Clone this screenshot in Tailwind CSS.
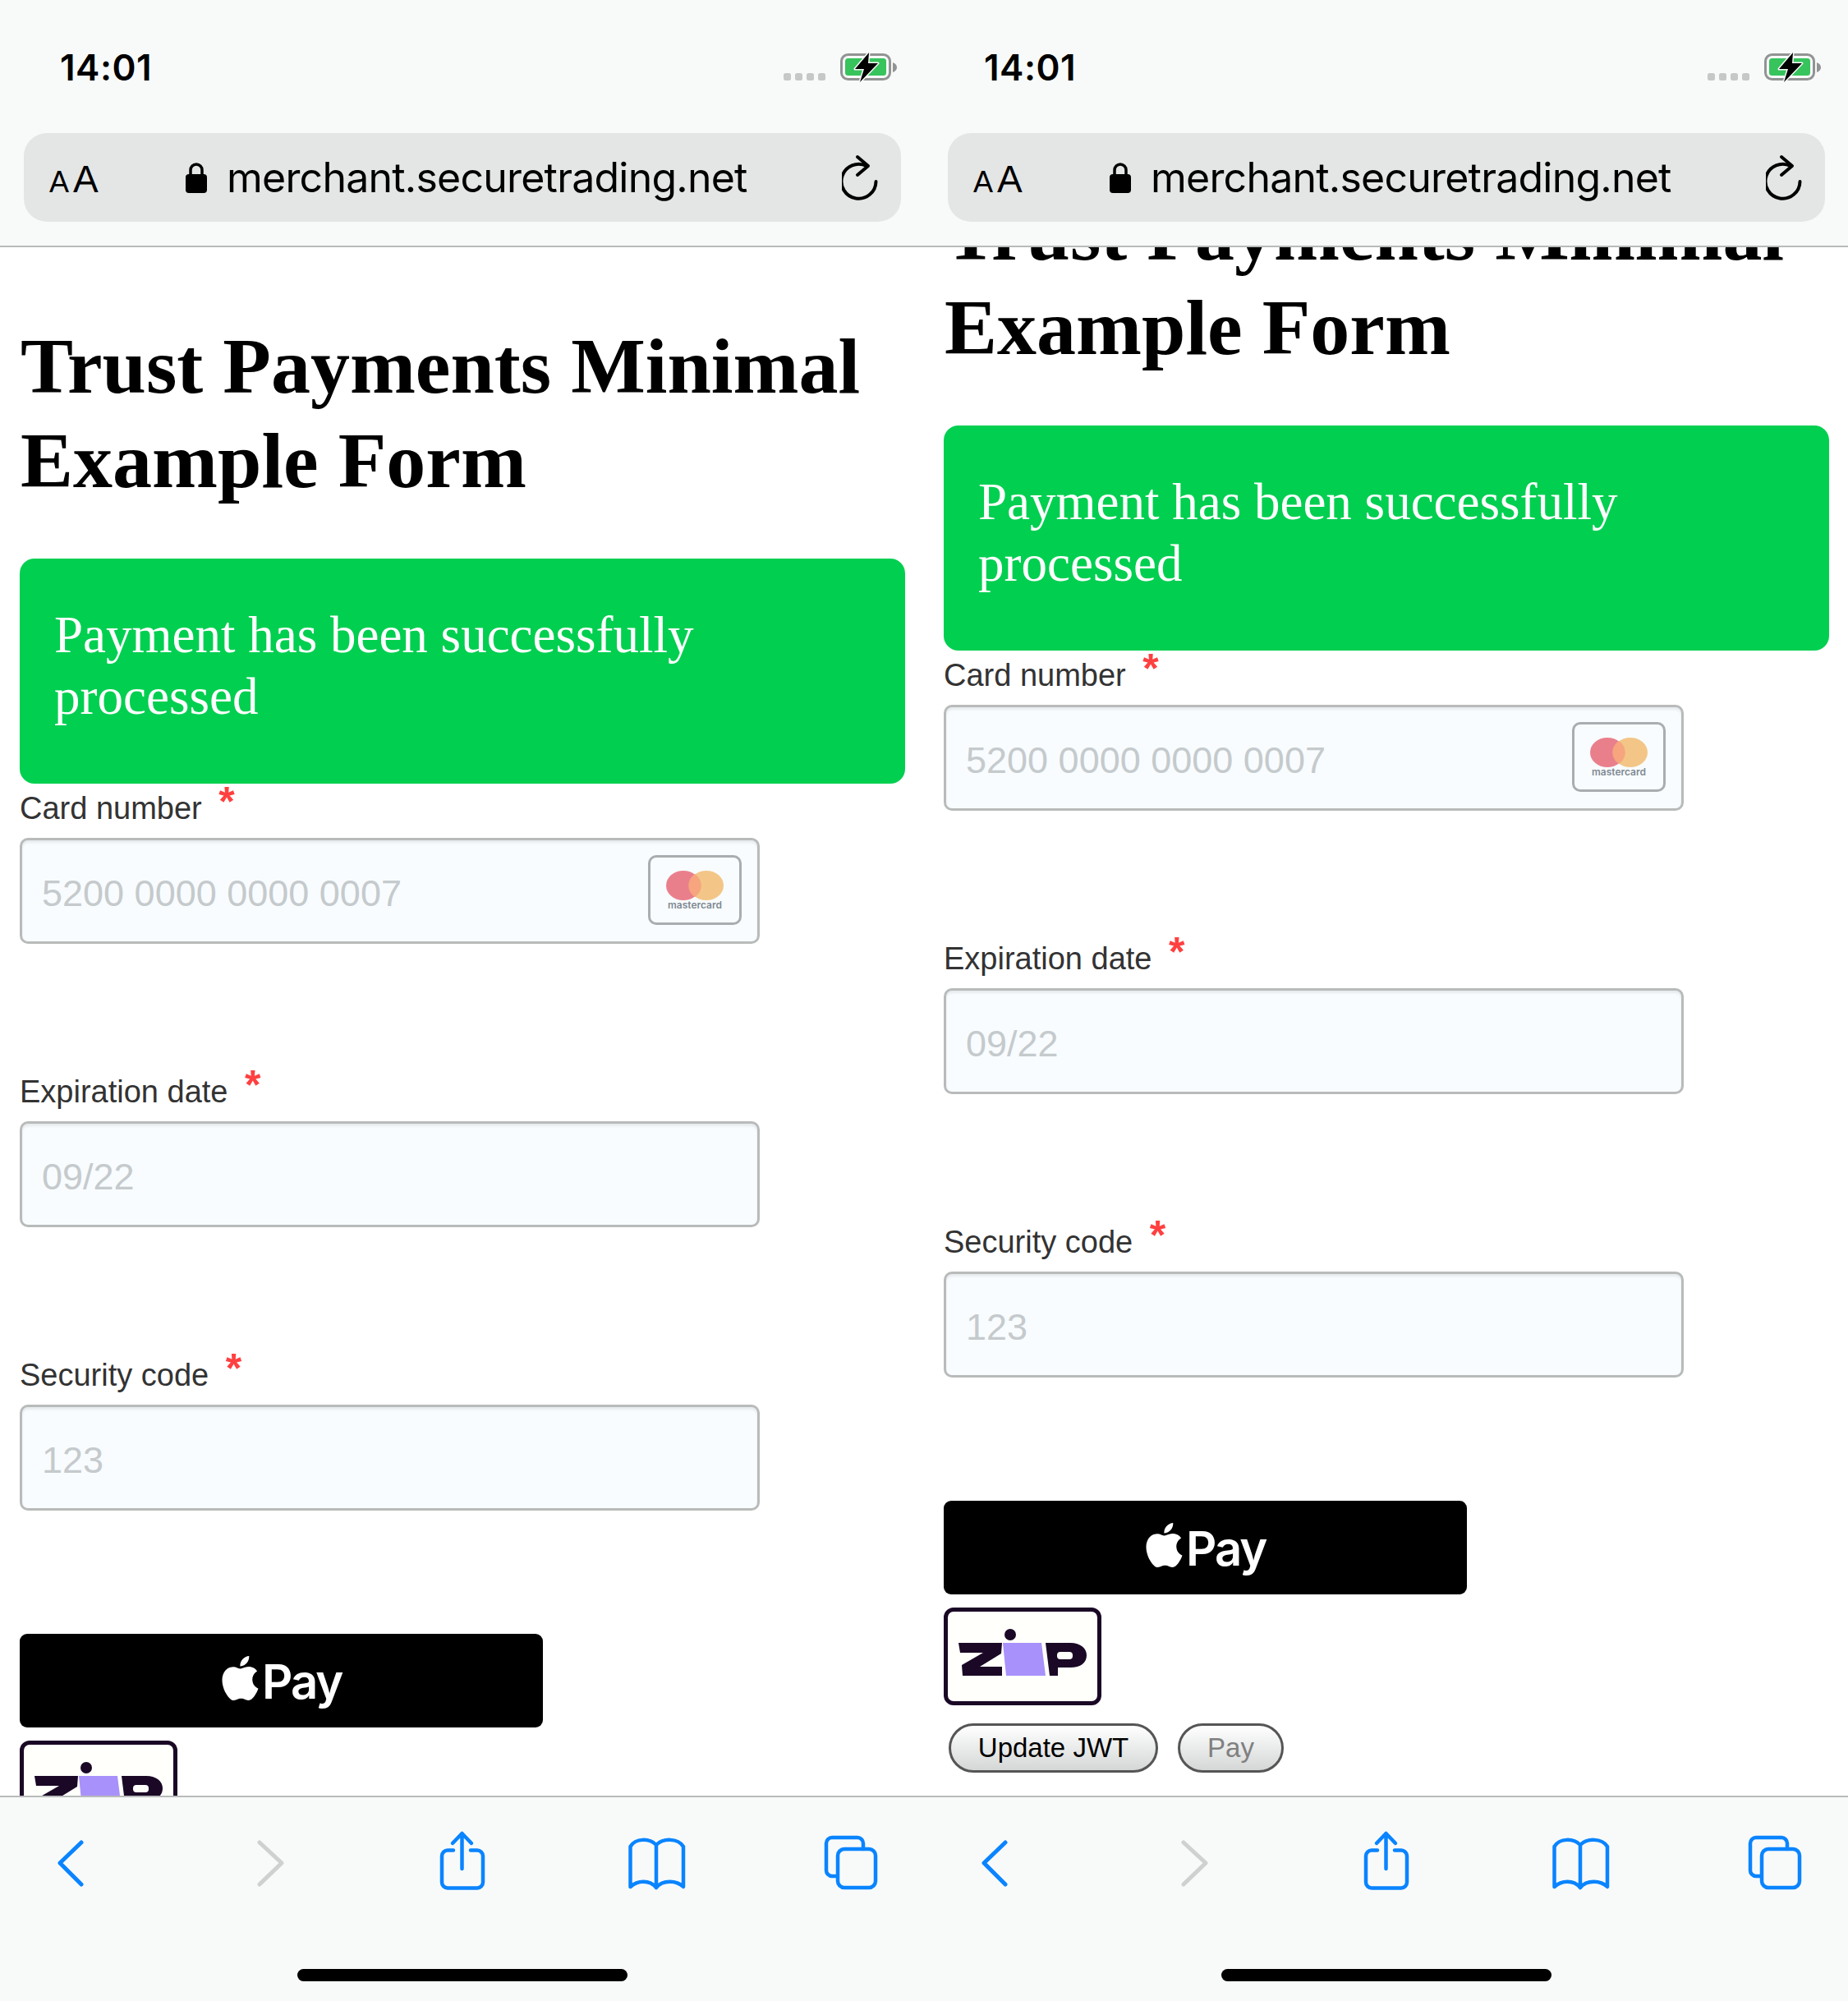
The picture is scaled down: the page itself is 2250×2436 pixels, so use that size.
<!DOCTYPE html>
<html>
<head>
<meta charset="utf-8">
<script src="https://cdn.jsdelivr.net/npm/@tailwindcss/browser@4"></script>
</head>
<body class="m-0 bg-white">
<div class="flex w-[2250px] h-[2436px] overflow-hidden">

<!-- LEFT PANEL -->
<section class="w-[1125px] h-[2436px] flex flex-col">
  <header class="h-[301px] shrink-0 bg-[#f8fafa] border-b-[2px] border-[#b9bbbb] font-['Inter',sans-serif] text-black">
    <div class="h-[162px] pt-[50px] pl-[73px] pr-[30px] flex justify-between items-start">
      <span class="text-[44px] leading-[64px] font-semibold tracking-[0.5px]">14:01</span>
      <svg class="mt-[10px]" width="145" height="44" viewBox="950 60 145 44">
        <g fill="#c6c8c8"><rect x="954" y="89" width="9" height="9" rx="2.5"/><rect x="968" y="89" width="9" height="9" rx="2.5"/><rect x="982" y="89" width="9" height="9" rx="2.5"/><rect x="996" y="89" width="9" height="9" rx="2.5"/></g>
        <rect x="1024.5" y="66.5" width="59" height="30" rx="8" fill="none" stroke="#929494" stroke-width="3"/>
        <rect x="1029" y="71" width="50" height="21" rx="3.5" fill="#37c45c"/>
        <path d="M1087 76 q5 2 5 6 q0 4 -5 6z" fill="#929494"/>
        <path d="M1058 64 L1041 84 L1052 84 L1047 100 L1069 77 L1057 77 Z" fill="#000" stroke="#f8fafa" stroke-width="3" paint-order="stroke" stroke-linejoin="round"/>
      </svg>
    </div>
    <div class="mx-[29px] w-[1068px] h-[108px] rounded-[28px] bg-[#e4e6e6] flex items-center">
      <span class="ml-[31px] w-[60px] flex items-baseline font-['Liberation_Sans',sans-serif] leading-none mt-[4px]"><span class="text-[36px] mr-[5px]">A</span><span class="text-[46px]">A</span></span>
      <svg class="ml-[105px]" width="28" height="38" viewBox="0 0 28 38"><path d="M7 16 V10 a7 7 0 0 1 14 0 V16" fill="none" stroke="#000" stroke-width="3.5"/><rect x="1" y="15" width="26" height="23" rx="4" fill="#000"/></svg>
      <span class="ml-[23px] text-[50px] leading-none tracking-[-0.78px]">merchant.securetrading.net</span>
      <svg class="ml-auto mr-[22px]" width="50" height="56" viewBox="0 0 50 56" fill="none" stroke="#000" stroke-width="4" stroke-linecap="round" stroke-linejoin="round"><path d="M30 14 A21 21 0 1 0 41.5 33"/><path d="M19 3 L32 14 L19 25"/></svg>
    </div>
  </header>
  <div class="flex-1 min-h-0 overflow-hidden bg-white">
    <div class="mt-[87px] px-[24px]">
      <h1 class="m-0 ml-[1px] w-[1060px] font-['Liberation_Serif',serif] font-bold text-[96px] leading-[115px] text-black">Trust Payments Minimal Example Form</h1>
      <div class="mt-[62px] w-[1078px] h-[274px] rounded-[18px] bg-[#00cf50] pl-[42px] pt-[56px] font-['Liberation_Serif',serif] text-[63px] leading-[75px] text-white">Payment has been successfully<br>processed</div>
      <div class="font-['Liberation_Sans',sans-serif]">
        <div class="h-[66px] pt-[5px] text-[38px] leading-[50px] text-[#333]">Card number <span class="ml-[10px] text-[#ff4040] text-[50px] font-bold leading-[0] align-[4px]">*</span></div>
        <div class="w-[901px] h-[129px] border-[3px] border-[#b8bbb9] rounded-[10px] bg-[#f8fcff] shadow-[inset_0_3px_3px_rgba(0,0,0,0.07)] flex items-center pl-[24px] pr-[19px] text-[45px] text-[#c5cacc]">
          <span class="mt-[6px]">5200 0000 0000 0007</span>
          <div class="ml-auto mb-[2px] w-[114px] h-[85px] border-[3px] border-[#a9adb0] rounded-[10px] flex flex-col items-center pt-[16px]">
            <svg width="70" height="36" viewBox="0 0 70 36"><ellipse cx="21" cy="18" rx="21" ry="18" fill="#ea7f8c"/><ellipse cx="49" cy="18" rx="21" ry="18" fill="#f3c687"/><path d="M35 4 a21 18 0 0 1 0 28 a21 18 0 0 1 0 -28z" fill="#f6a57e"/></svg>
            <span class="text-[12px] leading-[12px] text-[#808a92] font-['Inter',sans-serif] font-semibold">mastercard</span>
          </div>
        </div>
        <div class="mt-[150px] h-[66px] pt-[5px] text-[38px] leading-[50px] text-[#333]">Expiration date <span class="ml-[10px] text-[#ff4040] text-[50px] font-bold leading-[0] align-[4px]">*</span></div>
        <div class="w-[901px] h-[129px] border-[3px] border-[#b8bbb9] rounded-[10px] bg-[#f8fcff] shadow-[inset_0_3px_3px_rgba(0,0,0,0.07)] flex items-center pl-[24px] text-[45px] text-[#c5cacc]"><span class="mt-[6px]">09/22</span></div>
        <div class="mt-[150px] h-[66px] pt-[5px] text-[38px] leading-[50px] text-[#333]">Security code <span class="ml-[10px] text-[#ff4040] text-[50px] font-bold leading-[0] align-[4px]">*</span></div>
        <div class="w-[901px] h-[129px] border-[3px] border-[#b8bbb9] rounded-[10px] bg-[#f8fcff] shadow-[inset_0_3px_3px_rgba(0,0,0,0.07)] flex items-center pl-[24px] text-[45px] text-[#c5cacc]"><span class="mt-[6px]">123</span></div>
        <div class="mt-[150px] w-[637px] h-[114px] rounded-[9px] bg-black flex items-center pl-[246px] gap-[4px] text-white">
          <svg width="45" height="54" viewBox="2.5 0 19 24" class="mb-[6px] blur-[0.5px]" fill="#fff"><path d="M12.152 6.896c-.948 0-2.415-1.078-3.96-1.04-2.04.027-3.91 1.183-4.961 3.014-2.117 3.675-.546 9.103 1.519 12.09 1.013 1.454 2.208 3.09 3.792 3.039 1.52-.065 2.09-.987 3.935-.987 1.831 0 2.35.987 3.96.948 1.637-.026 2.676-1.48 3.676-2.948 1.156-1.688 1.636-3.325 1.662-3.415-.039-.013-3.182-1.221-3.22-4.857-.026-3.04 2.48-4.494 2.597-4.559-1.429-2.09-3.623-2.324-4.39-2.376-2-.156-3.675 1.09-4.61 1.09zM15.53 3.83c.843-1.012 1.4-2.427 1.245-3.83-1.207.052-2.662.805-3.532 1.818-.78.896-1.454 2.338-1.273 3.714 1.338.104 2.715-.688 3.559-1.701"/></svg>
          <span class="text-[58px] leading-none font-['Inter',sans-serif] font-semibold tracking-[-2px] blur-[0.6px] mt-[2px]">Pay</span>
        </div>
        <div class="mt-[16px] w-[192px] h-[119px] border-[5px] border-[#1a0826] rounded-[12px] bg-[#fffffb]">
          <svg width="182" height="109" viewBox="1154 1961 182 109"><path d="M1167 1999 H1220 L1219 2012 L1193 2028 H1220 V2039 H1172 L1171 2026 L1197 2011 H1169 Z" fill="#1a0826"/><circle cx="1230" cy="1989" r="7" fill="#1a0826"/><path d="M1221 1999 H1268 L1273 2039 H1225 Z" fill="#a891fb"/><path d="M1273 1999 H1303 C1316 1999 1323 2006 1323 2014 C1323 2023 1316 2029 1303 2029 H1288 V2039 H1278 Z" fill="#1a0826"/><rect x="1287" y="2010" width="19" height="9" rx="4" fill="#fffffb"/></svg>
        </div>
        <div class="mt-[22px] ml-[6px] flex gap-[24px]">
          <div class="w-[255px] h-[60px] rounded-full border-[3px] border-[#555] bg-gradient-to-b from-[#ffffff] to-[#d5d7d7] flex items-center justify-center text-[33px] text-black">Update JWT</div>
          <div class="w-[129px] h-[60px] rounded-full border-[3px] border-[#555] bg-gradient-to-b from-[#ffffff] to-[#d5d7d7] flex items-center justify-center text-[33px] text-[#808080]">Pay</div>
        </div>
      </div>
    </div>
  </div>
  <footer class="h-[250px] shrink-0 bg-[#f8fafa] border-t-[2px] border-[#b9bbbb]">
    <div class="pt-[38px] pl-[66px] flex h-[118px]">
      <svg width="40" height="80" viewBox="66 2226 40 80" fill="none" stroke="#0a84ff" stroke-width="5" stroke-linecap="round" stroke-linejoin="round"><path d="M99 2243 L73 2268 L99 2294"/></svg>
      <svg class="ml-[204px]" width="40" height="80" viewBox="310 2226 40 80" fill="none" stroke="#cfd0d0" stroke-width="5" stroke-linecap="round" stroke-linejoin="round"><path d="M316 2243 L343 2268 L316 2294"/></svg>
      <svg class="ml-[180px]" width="65" height="80" viewBox="530 2226 65 80" fill="none" stroke="#0a84ff" stroke-width="4.5" stroke-linecap="round" stroke-linejoin="round"><path d="M552 2252.5 H545 a7 7 0 0 0 -7 7 V2291.5 a7 7 0 0 0 7 7 H581 a7 7 0 0 0 7 -7 V2259.5 a7 7 0 0 0 -7 -7 H573"/><path d="M562.5 2275 V2232 M551 2244 L562.5 2232 L574 2244"/></svg>
      <svg class="ml-[165px]" width="80" height="80" viewBox="760 2226 80 80" fill="none" stroke="#0a84ff" stroke-width="4.5" stroke-linecap="round" stroke-linejoin="round"><path d="M799 2246 V2296 M799 2246 C791 2238 774 2237 767.5 2248 V2297 C776 2289 791 2288 799 2298 C807 2288 824 2289 832 2297 V2248 C825 2237 807 2238 799 2246Z"/></svg>
      <svg class="ml-[158px]" width="76" height="80" viewBox="998 2226 76 80" fill="none" stroke="#0a84ff" stroke-width="4.5" stroke-linecap="round" stroke-linejoin="round"><path d="M1018 2284 H1013 a7 7 0 0 1 -7 -7 V2244 a7 7 0 0 1 7 -7 H1044 a7 7 0 0 1 7 7 V2251"/><rect x="1020" y="2251" width="46" height="47" rx="8"/></svg>
    </div>
    <div class="mt-[91px] mx-auto w-[402px] h-[15px] rounded-full bg-black"></div>
  </footer>
</section>

<!-- RIGHT PANEL -->
<section class="w-[1125px] h-[2436px] flex flex-col">
  <header class="h-[301px] shrink-0 bg-[#f8fafa] border-b-[2px] border-[#b9bbbb] font-['Inter',sans-serif] text-black">
    <div class="h-[162px] pt-[50px] pl-[73px] pr-[30px] flex justify-between items-start">
      <span class="text-[44px] leading-[64px] font-semibold tracking-[0.5px]">14:01</span>
      <svg class="mt-[10px]" width="145" height="44" viewBox="950 60 145 44">
        <g fill="#c6c8c8"><rect x="954" y="89" width="9" height="9" rx="2.5"/><rect x="968" y="89" width="9" height="9" rx="2.5"/><rect x="982" y="89" width="9" height="9" rx="2.5"/><rect x="996" y="89" width="9" height="9" rx="2.5"/></g>
        <rect x="1024.5" y="66.5" width="59" height="30" rx="8" fill="none" stroke="#929494" stroke-width="3"/>
        <rect x="1029" y="71" width="50" height="21" rx="3.5" fill="#37c45c"/>
        <path d="M1087 76 q5 2 5 6 q0 4 -5 6z" fill="#929494"/>
        <path d="M1058 64 L1041 84 L1052 84 L1047 100 L1069 77 L1057 77 Z" fill="#000" stroke="#f8fafa" stroke-width="3" paint-order="stroke" stroke-linejoin="round"/>
      </svg>
    </div>
    <div class="mx-[29px] w-[1068px] h-[108px] rounded-[28px] bg-[#e4e6e6] flex items-center">
      <span class="ml-[31px] w-[60px] flex items-baseline font-['Liberation_Sans',sans-serif] leading-none mt-[4px]"><span class="text-[36px] mr-[5px]">A</span><span class="text-[46px]">A</span></span>
      <svg class="ml-[105px]" width="28" height="38" viewBox="0 0 28 38"><path d="M7 16 V10 a7 7 0 0 1 14 0 V16" fill="none" stroke="#000" stroke-width="3.5"/><rect x="1" y="15" width="26" height="23" rx="4" fill="#000"/></svg>
      <span class="ml-[23px] text-[50px] leading-none tracking-[-0.78px]">merchant.securetrading.net</span>
      <svg class="ml-auto mr-[22px]" width="50" height="56" viewBox="0 0 50 56" fill="none" stroke="#000" stroke-width="4" stroke-linecap="round" stroke-linejoin="round"><path d="M30 14 A21 21 0 1 0 41.5 33"/><path d="M19 3 L32 14 L19 25"/></svg>
    </div>
  </header>
  <div class="flex-1 min-h-0 overflow-hidden bg-white">
    <div class="-mt-[75px] px-[24px]">
      <h1 class="m-0 ml-[1px] w-[1060px] font-['Liberation_Serif',serif] font-bold text-[96px] leading-[115px] text-black">Trust Payments Minimal Example Form</h1>
      <div class="mt-[62px] w-[1078px] h-[274px] rounded-[18px] bg-[#00cf50] pl-[42px] pt-[56px] font-['Liberation_Serif',serif] text-[63px] leading-[75px] text-white">Payment has been successfully<br>processed</div>
      <div class="font-['Liberation_Sans',sans-serif]">
        <div class="h-[66px] pt-[5px] text-[38px] leading-[50px] text-[#333]">Card number <span class="ml-[10px] text-[#ff4040] text-[50px] font-bold leading-[0] align-[4px]">*</span></div>
        <div class="w-[901px] h-[129px] border-[3px] border-[#b8bbb9] rounded-[10px] bg-[#f8fcff] shadow-[inset_0_3px_3px_rgba(0,0,0,0.07)] flex items-center pl-[24px] pr-[19px] text-[45px] text-[#c5cacc]">
          <span class="mt-[6px]">5200 0000 0000 0007</span>
          <div class="ml-auto mb-[2px] w-[114px] h-[85px] border-[3px] border-[#a9adb0] rounded-[10px] flex flex-col items-center pt-[16px]">
            <svg width="70" height="36" viewBox="0 0 70 36"><ellipse cx="21" cy="18" rx="21" ry="18" fill="#ea7f8c"/><ellipse cx="49" cy="18" rx="21" ry="18" fill="#f3c687"/><path d="M35 4 a21 18 0 0 1 0 28 a21 18 0 0 1 0 -28z" fill="#f6a57e"/></svg>
            <span class="text-[12px] leading-[12px] text-[#808a92] font-['Inter',sans-serif] font-semibold">mastercard</span>
          </div>
        </div>
        <div class="mt-[150px] h-[66px] pt-[5px] text-[38px] leading-[50px] text-[#333]">Expiration date <span class="ml-[10px] text-[#ff4040] text-[50px] font-bold leading-[0] align-[4px]">*</span></div>
        <div class="w-[901px] h-[129px] border-[3px] border-[#b8bbb9] rounded-[10px] bg-[#f8fcff] shadow-[inset_0_3px_3px_rgba(0,0,0,0.07)] flex items-center pl-[24px] text-[45px] text-[#c5cacc]"><span class="mt-[6px]">09/22</span></div>
        <div class="mt-[150px] h-[66px] pt-[5px] text-[38px] leading-[50px] text-[#333]">Security code <span class="ml-[10px] text-[#ff4040] text-[50px] font-bold leading-[0] align-[4px]">*</span></div>
        <div class="w-[901px] h-[129px] border-[3px] border-[#b8bbb9] rounded-[10px] bg-[#f8fcff] shadow-[inset_0_3px_3px_rgba(0,0,0,0.07)] flex items-center pl-[24px] text-[45px] text-[#c5cacc]"><span class="mt-[6px]">123</span></div>
        <div class="mt-[150px] w-[637px] h-[114px] rounded-[9px] bg-black flex items-center pl-[246px] gap-[4px] text-white">
          <svg width="45" height="54" viewBox="2.5 0 19 24" class="mb-[6px] blur-[0.5px]" fill="#fff"><path d="M12.152 6.896c-.948 0-2.415-1.078-3.96-1.04-2.04.027-3.91 1.183-4.961 3.014-2.117 3.675-.546 9.103 1.519 12.09 1.013 1.454 2.208 3.09 3.792 3.039 1.52-.065 2.09-.987 3.935-.987 1.831 0 2.35.987 3.96.948 1.637-.026 2.676-1.48 3.676-2.948 1.156-1.688 1.636-3.325 1.662-3.415-.039-.013-3.182-1.221-3.22-4.857-.026-3.04 2.48-4.494 2.597-4.559-1.429-2.09-3.623-2.324-4.39-2.376-2-.156-3.675 1.09-4.61 1.09zM15.53 3.83c.843-1.012 1.4-2.427 1.245-3.83-1.207.052-2.662.805-3.532 1.818-.78.896-1.454 2.338-1.273 3.714 1.338.104 2.715-.688 3.559-1.701"/></svg>
          <span class="text-[58px] leading-none font-['Inter',sans-serif] font-semibold tracking-[-2px] blur-[0.6px] mt-[2px]">Pay</span>
        </div>
        <div class="mt-[16px] w-[192px] h-[119px] border-[5px] border-[#1a0826] rounded-[12px] bg-[#fffffb]">
          <svg width="182" height="109" viewBox="1154 1961 182 109"><path d="M1167 1999 H1220 L1219 2012 L1193 2028 H1220 V2039 H1172 L1171 2026 L1197 2011 H1169 Z" fill="#1a0826"/><circle cx="1230" cy="1989" r="7" fill="#1a0826"/><path d="M1221 1999 H1268 L1273 2039 H1225 Z" fill="#a891fb"/><path d="M1273 1999 H1303 C1316 1999 1323 2006 1323 2014 C1323 2023 1316 2029 1303 2029 H1288 V2039 H1278 Z" fill="#1a0826"/><rect x="1287" y="2010" width="19" height="9" rx="4" fill="#fffffb"/></svg>
        </div>
        <div class="mt-[22px] ml-[6px] flex gap-[24px]">
          <div class="w-[255px] h-[60px] rounded-full border-[3px] border-[#555] bg-gradient-to-b from-[#ffffff] to-[#d5d7d7] flex items-center justify-center text-[33px] text-black">Update JWT</div>
          <div class="w-[129px] h-[60px] rounded-full border-[3px] border-[#555] bg-gradient-to-b from-[#ffffff] to-[#d5d7d7] flex items-center justify-center text-[33px] text-[#808080]">Pay</div>
        </div>
      </div>
    </div>
  </div>
  <footer class="h-[250px] shrink-0 bg-[#f8fafa] border-t-[2px] border-[#b9bbbb]">
    <div class="pt-[38px] pl-[66px] flex h-[118px]">
      <svg width="40" height="80" viewBox="66 2226 40 80" fill="none" stroke="#0a84ff" stroke-width="5" stroke-linecap="round" stroke-linejoin="round"><path d="M99 2243 L73 2268 L99 2294"/></svg>
      <svg class="ml-[204px]" width="40" height="80" viewBox="310 2226 40 80" fill="none" stroke="#cfd0d0" stroke-width="5" stroke-linecap="round" stroke-linejoin="round"><path d="M316 2243 L343 2268 L316 2294"/></svg>
      <svg class="ml-[180px]" width="65" height="80" viewBox="530 2226 65 80" fill="none" stroke="#0a84ff" stroke-width="4.5" stroke-linecap="round" stroke-linejoin="round"><path d="M552 2252.5 H545 a7 7 0 0 0 -7 7 V2291.5 a7 7 0 0 0 7 7 H581 a7 7 0 0 0 7 -7 V2259.5 a7 7 0 0 0 -7 -7 H573"/><path d="M562.5 2275 V2232 M551 2244 L562.5 2232 L574 2244"/></svg>
      <svg class="ml-[165px]" width="80" height="80" viewBox="760 2226 80 80" fill="none" stroke="#0a84ff" stroke-width="4.5" stroke-linecap="round" stroke-linejoin="round"><path d="M799 2246 V2296 M799 2246 C791 2238 774 2237 767.5 2248 V2297 C776 2289 791 2288 799 2298 C807 2288 824 2289 832 2297 V2248 C825 2237 807 2238 799 2246Z"/></svg>
      <svg class="ml-[158px]" width="76" height="80" viewBox="998 2226 76 80" fill="none" stroke="#0a84ff" stroke-width="4.5" stroke-linecap="round" stroke-linejoin="round"><path d="M1018 2284 H1013 a7 7 0 0 1 -7 -7 V2244 a7 7 0 0 1 7 -7 H1044 a7 7 0 0 1 7 7 V2251"/><rect x="1020" y="2251" width="46" height="47" rx="8"/></svg>
    </div>
    <div class="mt-[91px] mx-auto w-[402px] h-[15px] rounded-full bg-black"></div>
  </footer>
</section>
</div>
</body>
</html>
